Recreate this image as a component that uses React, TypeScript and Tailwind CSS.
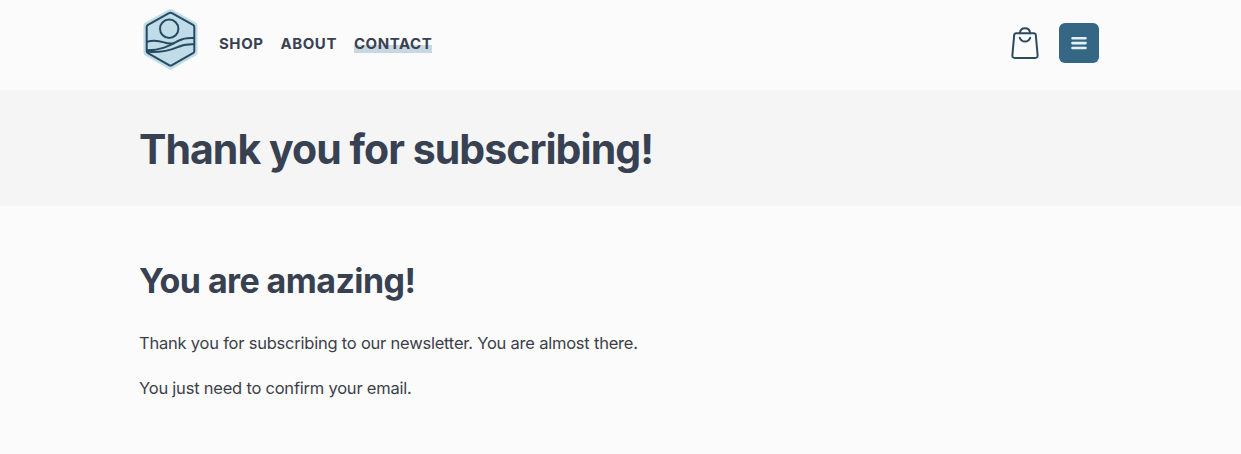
import React from "react";

function Logo() {
  return (
    <svg className="h-[62px] w-[60px] shrink-0" viewBox="0 0 60 62" fill="none">
      <path
        d="M30.5 4.5 54 17.5V44.5L30.5 58 7 44.5V17.5Z"
        fill="#bfdce8"
        stroke="#bfdce8"
        strokeWidth="7"
        strokeLinejoin="round"
      />
      <g stroke="#274a61" strokeWidth="2" strokeLinejoin="round" strokeLinecap="round">
        <path d="M29 5.1Q30.5 4.2 32 5.1L53 16.8Q54.3 17.6 54.3 19V43Q54.3 44.4 53 45.2L32 57.2Q30.5 58 29 57.2L8 45.2Q6.7 44.4 6.7 43V19Q6.7 17.6 8 16.8Z" />
        <circle cx="29.2" cy="20.8" r="9.2" />
        <path d="M7 33.8C14 31.8 19 32.8 24 34.4C28 35.8 31 35.8 34 35.2" />
        <path d="M7 42.3C24 42.3 32 36 39 32.5C45 29.3 50 29.8 54 30" />
        <path d="M7 43.8C23 44.6 31 42 37 39.3C43 36.6 47 36 54 36.3" />
      </g>
    </svg>
  );
}

function BagIcon() {
  return (
    <svg className="h-[34px] w-7" viewBox="0 0 28 34" fill="none" stroke="#2b4a60" strokeWidth="2" strokeLinecap="round" strokeLinejoin="round">
      <path d="M5.2 7.2H22.8Q24.6 7.2 24.8 9L26.6 29Q26.8 32 24.2 32H3.8Q1.2 32 1.4 29L3.2 9Q3.4 7.2 5.2 7.2Z" />
      <path d="M8.9 7.2C9.4 .5 18.6 .5 19.1 7.2" />
      <path d="M8.8 11.8C10.5 16.8 17.5 16.8 19.2 11.8" />
    </svg>
  );
}

export default function App() {
  return (
    <div className="min-h-[454px] bg-[#fbfbfb] font-['Inter',sans-serif] text-[#374151]">
      <header className="mx-auto flex h-[90px] w-[963px] items-start">
        <div className="ml-px pt-2">
          <Logo />
        </div>
        <nav className="ml-[19px] flex gap-[17px] pt-[34px] text-[15px] leading-[19px] font-bold tracking-[0.55px]">
          <a>SHOP</a>
          <a>ABOUT</a>
          <a className="bg-linear-to-b from-transparent from-58% to-[#c8d8e2] to-58%">CONTACT</a>
        </nav>
        <div className="mr-[3px] ml-auto flex items-start gap-5">
          <div className="pt-[26px]">
            <BagIcon />
          </div>
          <button aria-label="Menu" className="mt-[23px] flex size-10 items-center justify-center rounded-md bg-[#356785]">
            <svg className="size-4" viewBox="0 0 16 16" stroke="#e3f1f7" strokeWidth="2.6" strokeLinecap="round">
              <path d="M1.5 3.2H14.5M1.5 8.1H14.5M1.5 13H14.5" />
            </svg>
          </button>
        </div>
      </header>
      <section className="h-[116px] bg-[#f5f5f5]">
        <div className="mx-auto w-[963px] pt-[35px]">
          <h1 className="text-[41px] leading-[48px] font-bold tracking-[-0.95px]">Thank you for subscribing!</h1>
        </div>
      </section>
      <main className="mx-auto w-[963px] pt-[54px]">
        <h2 className="text-[34px] leading-[42px] font-bold tracking-[-0.58px]">You are amazing!</h2>
        <p className="mt-[27px] text-[16.5px] leading-7 tracking-[-0.22px] text-[#3b3f48]">Thank you for subscribing to our newsletter. You are almost there.</p>
        <p className="mt-[17px] text-[16.5px] leading-7 tracking-[-0.22px] text-[#3b3f48]">You just need to confirm your email.</p>
      </main>
    </div>
  );
}
